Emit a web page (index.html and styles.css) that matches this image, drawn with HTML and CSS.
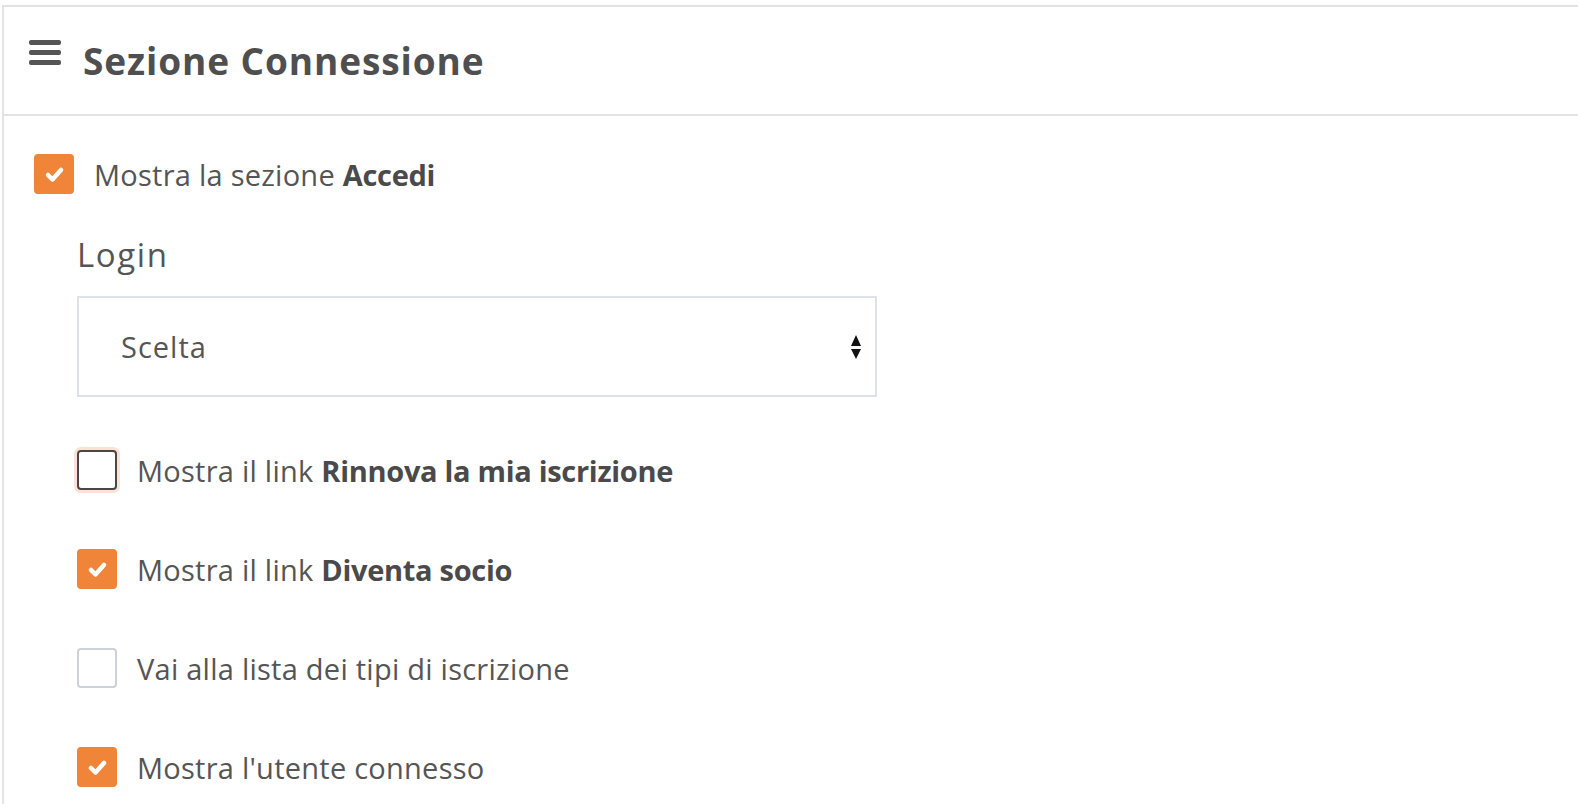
FILE: index.html
```html
<!DOCTYPE html>
<html lang="it">
<head>
    <meta charset="UTF-8">
    <meta name="viewport" content="width=device-width, initial-scale=1.0">
    <title>Sezione Connessione</title>
    <link rel="stylesheet" href="styles.css">
</head>
<body>
    <div class="panel">
        <div class="panel-header">
            <svg class="menu-icon" width="32" height="26" viewBox="0 0 32 26">
                <rect x="0" y="0" width="32" height="5" rx="2" fill="#555"/>
                <rect x="0" y="10" width="32" height="5" rx="2" fill="#555"/>
                <rect x="0" y="20" width="32" height="5" rx="2" fill="#555"/>
            </svg>
            <h1>Sezione Connessione</h1>
        </div>

        <div class="panel-body">
            <!-- Accedi -->
            <label class="check-row">
                <span class="box checked">
                    <svg width="21" height="17" viewBox="0 0 21 17"><polyline points="4,9 8.5,13.5 17,4" fill="none" stroke="#fff" stroke-width="4.5" stroke-linecap="round" stroke-linejoin="round"/></svg>
                </span>
                <span>Mostra la sezione <b>Accedi</b></span>
            </label>

            <div class="sub">
                <div class="field-label">Login</div>
                <div class="select">
                    <span>Scelta</span>
                    <svg width="12" height="26" viewBox="0 0 12 26">
                        <polygon points="6,1 11,12 1,12" fill="#111"/>
                        <polygon points="1,15 11,15 6,25" fill="#111"/>
                    </svg>
                </div>

                <label class="check-row">
                    <span class="box focused"></span>
                    <span>Mostra il link <b>Rinnova la mia iscrizione</b></span>
                </label>

                <label class="check-row">
                    <span class="box checked">
                        <svg width="21" height="17" viewBox="0 0 21 17"><polyline points="4,9 8.5,13.5 17,4" fill="none" stroke="#fff" stroke-width="4.5" stroke-linecap="round" stroke-linejoin="round"/></svg>
                    </span>
                    <span>Mostra il link <b>Diventa socio</b></span>
                </label>

                <label class="check-row">
                    <span class="box"></span>
                    <span>Vai alla lista dei tipi di iscrizione</span>
                </label>

                <label class="check-row">
                    <span class="box checked">
                        <svg width="21" height="17" viewBox="0 0 21 17"><polyline points="4,9 8.5,13.5 17,4" fill="none" stroke="#fff" stroke-width="4.5" stroke-linecap="round" stroke-linejoin="round"/></svg>
                    </span>
                    <span>Mostra l'utente connesso</span>
                </label>
            </div>
        </div>
    </div>
</body>
</html>
```

FILE: styles.css
```css
body {
    margin: 0;
    padding: 0;
    background-color: #fff;
    font-family: "Open Sans", Arial, sans-serif;
    color: #555;
    overflow: hidden;
}
.panel {
    margin: 5px 0 0 2px;
    border: 2px solid #e3e3e3;
    border-right: none;
    border-bottom: none;
    height: 900px;
}
.panel-header {
    display: flex;
    align-items: center;
    height: 107px;
    padding-left: 25px;
    border-bottom: 2px solid #e3e3e3;
}
.menu-icon {
    margin-top: -16px;
}
.panel-header h1 {
    margin: 0 0 0 22px;
    font-size: 37px;
    letter-spacing: 0.9px;
    font-weight: 700;
    color: #4f4f4f;
}
.panel-body {
    padding: 38px 0 0 30px;
}
.check-row {
    display: flex;
    align-items: center;
    font-size: 29px;
    letter-spacing: 0.25px;
    height: 40px;
}
.check-row b {
    font-weight: 700;
    letter-spacing: -0.3px;
    color: #4a4a4a;
}
.box {
    box-sizing: border-box;
    width: 40px;
    height: 40px;
    margin-right: 20px;
    border: 2px solid #cdd1d9;
    border-radius: 4px;
    display: flex;
    align-items: center;
    justify-content: center;
    flex-shrink: 0;
}
.box.checked {
    background-color: #f0853a;
    border-color: #f0853a;
}
.box.focused {
    border-color: #474747;
    box-shadow: 0 0 0 3px #fbe2d2;
}
.sub {
    padding-left: 43px;
    padding-top: 41px;
}
.field-label {
    font-size: 33px;
    letter-spacing: 1.6px;
    line-height: 40px;
    margin-bottom: 21px;
}
.select {
    box-sizing: border-box;
    width: 800px;
    height: 101px;
    border: 2px solid #dde1ea;
    display: flex;
    align-items: center;
    justify-content: space-between;
    padding: 0 13px 0 42px;
    font-size: 29px;
    letter-spacing: 1px;
    margin-bottom: 53px;
}
.sub .check-row {
    margin-bottom: 59px;
}
```
